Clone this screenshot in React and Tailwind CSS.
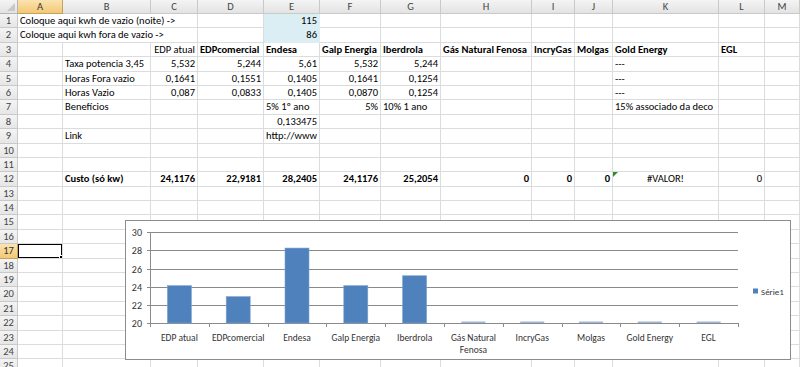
import React from "react";

const W = ["w-[45px]","w-[88px]","w-[47px]","w-[66px]","w-[56px]","w-[61px]","w-[60px]","w-[91px]","w-[43px]","w-[38px]","w-[106px]","w-[46px]","w-[35px]"];
const LET = "ABCDEFGHIJKLM".split("");

const R = (t, o = {}) => ({ t, al: "r", ...o });
const L = (t, o = {}) => ({ t, al: "l", ...o });

const DATA = {
  1: { A: L("Coloque aqui kwh de vazio (noite) ->", { span: 3 }), E: R("115", { bg: true }) },
  2: { A: L("Coloque aqui kwh fora de vazio ->", { span: 3 }), E: R("86", { bg: true }) },
  3: {
    C: R("EDP atual"), D: L("EDPcomercial", { b: true }), E: L("Endesa", { b: true }),
    F: L("Galp Energia", { b: true }), G: L("Iberdrola", { b: true }), H: L("Gás Natural Fenosa", { b: true }),
    I: L("IncryGas", { b: true }), J: L("Molgas", { b: true }), K: L("Gold Energy", { b: true }), L: L("EGL", { b: true }),
  },
  4: { B: L("Taxa potencia 3,45"), C: R("5,532"), D: R("5,244"), E: R("5,61"), F: R("5,532"), G: R("5,244"), K: L("---") },
  5: { B: L("Horas Fora vazio"), C: R("0,1641"), D: R("0,1551"), E: R("0,1405"), F: R("0,1641"), G: R("0,1254"), K: L("---") },
  6: { B: L("Horas Vazio"), C: R("0,087"), D: R("0,0833"), E: R("0,1405"), F: R("0,0870"), G: R("0,1254"), K: L("---") },
  7: { B: L("Benefícios"), E: L("5% 1º ano"), F: R("5%"), G: L("10% 1 ano"), K: L("15% associado da deco") },
  8: { E: R("0,133475") },
  9: { B: L("Link"), E: L("http://www") },
  12: {
    B: L("Custo (só kw)", { b: true }), C: R("24,1176", { b: true }), D: R("22,9181", { b: true }),
    E: R("28,2405", { b: true }), F: R("24,1176", { b: true }), G: R("25,2054", { b: true }),
    H: R("0", { b: true }), I: R("0", { b: true }), J: R("0", { b: true }),
    K: { t: "#VALOR!", al: "c", tri: true }, L: R("0"),
  },
};

function HeaderRow() {
  return (
    <div className="flex h-[14px]">
      <div className="w-[18px] shrink-0 border-r border-b border-[#b5b5b5] bg-gradient-to-b from-[#f4f4f4] to-[#e3e3e3] relative">
        <svg width="8" height="8" className="absolute right-[2px] bottom-[2px]">
          <polygon points="8,0 8,8 0,8" fill="#c8c8c8" />
        </svg>
      </div>
      {LET.map((l, i) => (
        <div
          key={l}
          className={`${W[i]} shrink-0 border-r border-b text-center text-[10.5px] leading-[13px] ${
            l === "A"
              ? "bg-gradient-to-b from-[#fbe3b0] to-[#f3c873] border-[#c2a25e] text-[#333]"
              : "bg-gradient-to-b from-[#f4f4f4] to-[#e3e3e3] border-[#c9c9c9] text-[#444]"
          }`}
        >
          {l}
        </div>
      ))}
    </div>
  );
}

function Row({ r }) {
  const row = DATA[r] || {};
  const cells = [];
  let i = 0;
  while (i < LET.length) {
    const l = LET[i];
    const c = row[l];
    let w = W[i];
    if (c && c.span === 3) {
      w = "w-[180px]";
    }
    const al = c ? (c.al === "r" ? "text-right" : c.al === "c" ? "text-center" : "text-left") : "";
    const bg = c && c.bg ? "bg-[#daeef3] border-[#daeef3]" : "border-[#dadcdd]";
    cells.push(
      <div
        key={l}
        className={`${w} shrink-0 border-r border-b ${bg} px-[2px] text-[10.5px] leading-[13.4px] whitespace-nowrap overflow-hidden relative text-black ${al} ${
          c && c.b ? "font-bold" : ""
        }`}
      >
        {c && c.tri && (
          <svg width="5" height="5" className="absolute left-0 top-0">
            <polygon points="0,0 5,0 0,5" fill="#2e8b2e" />
          </svg>
        )}
        {c ? c.t : ""}
        {r === 17 && l === "A" && (
          <div className="absolute left-[-1px] top-[-1px] w-[46px] h-[16px] border-2 border-black">
            <div className="absolute right-[-4px] bottom-[-4px] w-[6px] h-[6px] bg-black border border-white" />
          </div>
        )}
      </div>
    );
    i += c && c.span === 3 ? 3 : 1;
  }
  const sel = r === 17;
  return (
    <div className="flex h-[14.4px]">
      <div
        className={`w-[18px] shrink-0 border-r border-b text-center text-[10.5px] leading-[13.4px] ${
          sel
            ? "bg-gradient-to-b from-[#fbe3b0] to-[#f3c873] border-[#c2a25e] text-[#333]"
            : "bg-gradient-to-b from-[#f4f4f4] to-[#e6e6e6] border-[#c9c9c9] text-[#444]"
        }`}
      >
        {r}
      </div>
      {cells}
    </div>
  );
}

const CATS = [
  ["EDP atual"], ["EDPcomercial"], ["Endesa"], ["Galp Energia"], ["Iberdrola"],
  ["Gás Natural", "Fenosa"], ["IncryGas"], ["Molgas"], ["Gold Energy"], ["EGL"],
];
const VALS = [24.1176, 22.9181, 28.2405, 24.1176, 25.2054, 0, 0, 0, 0, 0];

function Chart() {
  const x0 = 24, x1 = 612, yTop = 11, yBot = 102.25;
  const step = (yBot - yTop) / 10;
  const cw = (x1 - x0) / 10;
  const bw = 24;
  const ticks = [30, 28, 26, 24, 22, 20];
  return (
    <div className="absolute left-[125px] top-[220px] w-[666px] h-[140px] border border-[#8c8c8c] bg-white">
      <svg width="664" height="138" className="block">
        {ticks.map((t) => {
          const y = Math.round(yBot - (t - 20) * step) + 0.5;
          return (
            <g key={t}>
              <line x1={x0 - 3} y1={y} x2={x1} y2={y} stroke="#8a8a8a" strokeWidth="1" />
              <text x="16" y={y + 3.5} textAnchor="end" fontSize="10" fill="#333">{t}</text>
            </g>
          );
        })}
        <line x1={x0 + 0.5} y1={yTop} x2={x0 + 0.5} y2={yBot} stroke="#8a8a8a" />
        {Array.from({ length: 11 }).map((_, i) => {
          const x = Math.round(x0 + i * cw) + 0.5;
          return <line key={i} x1={x} y1={Math.round(yBot)} x2={x} y2={Math.round(yBot) + 4} stroke="#8a8a8a" />;
        })}
        {VALS.map((v, i) => {
          const x = x0 + i * cw + (cw - bw) / 2;
          if (v <= 20) {
            return <rect key={i} x={x} y={Math.round(yBot) - 1.5} width={bw} height="1.5" fill="#9fb6d6" />;
          }
          const yt = yBot - (v - 20) * step;
          return <rect key={i} x={x} y={yt} width={bw} height={Math.round(yBot) - yt} fill="#4f81bd" stroke="#7da2cf" strokeWidth="0.6" />;
        })}
        {CATS.map((c, i) => {
          const cx = x0 + i * cw + cw / 2;
          return c.map((line, j) => (
            <text key={i + "-" + j} x={cx} y={119.5 + j * 12} textAnchor="middle" fontSize="9.5" fill="#333">
              {line}
            </text>
          ));
        })}
        <rect x="627" y="67.5" width="5" height="5" fill="#4f81bd" />
        <text x="635" y="73.5" fontSize="9" fill="#333">Série1</text>
      </svg>
    </div>
  );
}

export default function App() {
  return (
    <div className="w-[800px] h-[367px] overflow-hidden relative bg-white font-['Carlito','Lato',sans-serif]">
      <HeaderRow />
      {Array.from({ length: 25 }).map((_, i) => (
        <Row key={i} r={i + 1} />
      ))}
      <Chart />
    </div>
  );
}
